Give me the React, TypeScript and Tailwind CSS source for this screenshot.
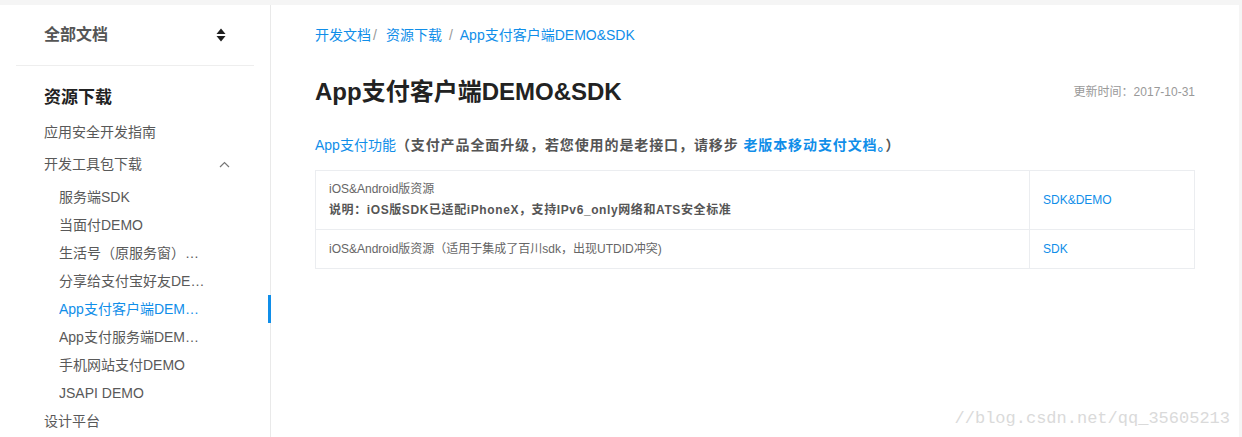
import { type ReactNode } from 'react';

const FONT = { fontFamily: '"Liberation Sans", "Noto Sans CJK SC", sans-serif' };

const subItems = [
  '服务端SDK',
  '当面付DEMO',
  '生活号（原服务窗）相关DEMO',
  '分享给支付宝好友DEMO',
  'App支付客户端DEMO&SDK',
  'App支付服务端DEMO&SDK',
  '手机网站支付DEMO',
  'JSAPI DEMO',
];

function SortIcon(): ReactNode {
  return (
    <svg width="10" height="14" viewBox="0 0 10 14" aria-hidden>
      <path d="M5 0.5 L9.5 6 H0.5 Z" fill="#1f1f1f" />
      <path d="M5 13.5 L9.5 8 H0.5 Z" fill="#1f1f1f" />
    </svg>
  );
}

function ChevronUp(): ReactNode {
  return (
    <svg width="11" height="7" viewBox="0 0 11 7" aria-hidden>
      <path d="M1 6 L5.5 1.5 L10 6" fill="none" stroke="#777" strokeWidth="1.2" />
    </svg>
  );
}

function Sidebar(): ReactNode {
  return (
    <aside className="w-[271px] shrink-0 border-r border-[#e9e9e9] bg-white">
      {/* Header */}
      <div className="mx-4 flex h-[61px] items-center justify-between border-b border-[#eeeeee] pl-7 pr-[28px]">
        <span className="text-[16px] font-bold text-[#555]">全部文档</span>
        <SortIcon />
      </div>

      <div className="pt-[14px]">
        <div className="flex h-9 items-center pl-11 text-[17px] font-bold text-[#222]">资源下载</div>
        <div className="flex h-8 items-center pl-11 text-[14px] text-[#595959]">应用安全开发指南</div>
        <div className="flex h-8 items-center justify-between pl-11 pr-[40px] text-[14px] text-[#595959]">
          <span>开发工具包下载</span>
          <ChevronUp />
        </div>
        <ul className="mt-[3px]">
          {subItems.map((item, i) => {
            const active = i === 4;
            return (
              <li key={item} className="relative flex h-7 items-center pl-[59px] text-[14px]">
                <span className={`w-[146px] truncate ${active ? 'text-[#108ee9]' : 'text-[#595959]'}`}>
                  {item}
                </span>
                {active && <span className="absolute right-[-1px] top-0 h-7 w-[3px] bg-[#108ee9]" />}
              </li>
            );
          })}
        </ul>
        <div className="flex h-7 items-center pl-11 text-[14px] text-[#595959]">设计平台</div>
      </div>
    </aside>
  );
}

function Content(): ReactNode {
  return (
    <main className="relative flex-1 px-11">
      {/* Breadcrumb */}
      <div className="flex h-[60px] items-center text-[14px] text-[#108ee9]">
        <span>开发文档</span>
        <span className="ml-[2px] mr-[9px] text-[#999]">/</span>
        <span>资源下载</span>
        <span className="mx-[7px] text-[#999]">/</span>
        <span>App支付客户端DEMO&amp;SDK</span>
      </div>

      {/* Title row */}
      <div className="mt-[4px] flex h-[46px] items-center justify-between">
        <h1 className="text-[24px] font-bold text-[#222]">App支付客户端DEMO&amp;SDK</h1>
        <span className="text-[12px] text-[#999]">更新时间：2017-10-31</span>
      </div>

      {/* Notice */}
      <p className="mt-[18px] text-[14px] leading-[24px] text-[#555]">
        <span className="text-[#108ee9]">App支付功能</span>
        <span className="font-bold tracking-[0.9px]">（支付产品全面升级，若您使用的是老接口，请移步 </span>
        <span className="font-bold tracking-[0.9px] text-[#108ee9]">老版本移动支付文档。</span>
        <span className="font-bold">）</span>
      </p>

      {/* Resource table */}
      <table className="mt-[13px] w-full border-collapse text-[12px] text-[#666]">
        <tbody>
          <tr className="h-[59px]">
            <td className="border border-[#ebedf0] px-[13px] align-middle">
              <div className="leading-[20px]">iOS&amp;Android版资源</div>
              <div className="font-bold leading-[22px] tracking-[0.6px] text-[#555]">
                说明：iOS版SDK已适配iPhoneX，支持IPv6_only网络和ATS安全标准
              </div>
            </td>
            <td className="w-[165px] border border-[#ebedf0] px-[13px] text-[#108ee9]">SDK&amp;DEMO</td>
          </tr>
          <tr className="h-[39px]">
            <td className="border border-[#ebedf0] px-[13px]">
              iOS&amp;Android版资源（适用于集成了百川sdk，出现UTDID冲突)
            </td>
            <td className="border border-[#ebedf0] px-[13px] text-[#108ee9]">SDK</td>
          </tr>
        </tbody>
      </table>

      {/* Watermark */}
      <span
        className="absolute right-[9px] top-[401px] text-[17px] text-[#dadada]"
        style={{ fontFamily: '"Liberation Mono", monospace' }}
      >
        //blog.csdn.net/qq_35605213
      </span>
    </main>
  );
}

export default function App(): ReactNode {
  return (
    <div className="h-[437px] w-[1242px] overflow-hidden bg-[#f5f5f5] pt-[5px]" style={FONT}>
      <div className="flex h-full w-[1239px] bg-white">
        <Sidebar />
        <Content />
      </div>
    </div>
  );
}
